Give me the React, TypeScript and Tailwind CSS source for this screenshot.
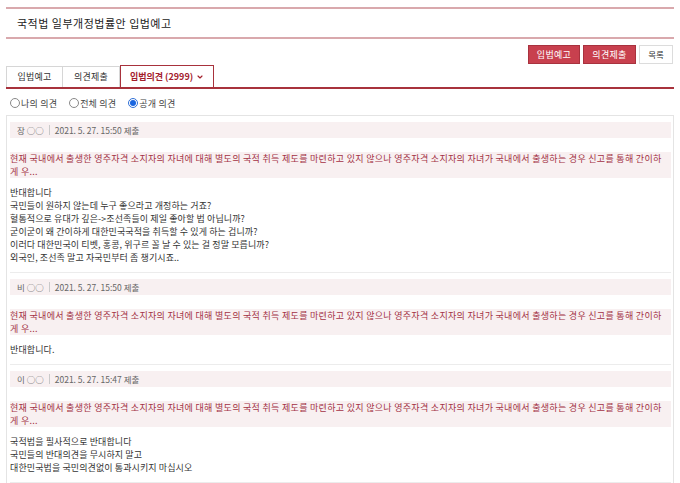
import { ChevronDown } from "lucide-react";

const summaryA =
  "현재 국내에서 출생한 영주자격 소지자의 자녀에 대해 별도의 국적 취득 제도를 마련하고 있지 않으나 영주자격 소지자의 자녀가 국내에서 출생하는 경우 신고를 통해 간이하";
const summaryB = "게 우...";

const comments = [
  {
    name: "장",
    date: "2021. 5. 27. 15:50 제출",
    body: [
      "반대합니다",
      "국민들이 원하지 않는데 누구 좋으라고 개정하는 거죠?",
      "혈통적으로 유대가 깊은->조선족들이 제일 좋아할 법 아닙니까?",
      "굳이굳이 왜 간이하게 대한민국국적을 취득할 수 있게 하는 겁니까?",
      "이러다 대한민국이 티벳, 홍콩, 위구르 꼴 날 수 있는 걸 정말 모릅니까?",
      "외국인, 조선족 말고 자국민부터 좀 챙기시죠..",
    ],
  },
  {
    name: "비",
    date: "2021. 5. 27. 15:50 제출",
    body: ["반대합니다."],
  },
  {
    name: "이",
    date: "2021. 5. 27. 15:47 제출",
    body: [
      "국적법을 필사적으로 반대합니다",
      "국민들의 반대의견을 무시하지 말고",
      "대한민국법을 국민의견없이 통과시키지 마십시오",
    ],
  },
];

function Radio({ label, checked }: { label: string; checked?: boolean }) {
  return (
    <label className="flex items-center">
      <span
        className={
          checked
            ? "w-[10px] h-[10px] rounded-full border border-[#2f6fd6] bg-white flex items-center justify-center"
            : "w-[10px] h-[10px] rounded-full border border-[#888] bg-white"
        }
      >
        {checked && <span className="w-[6px] h-[6px] rounded-full bg-[#1a66e0]" />}
      </span>
      <span className="ml-[1px] text-[9px] tracking-[0.2px] text-[#444] leading-none">{label}</span>
    </label>
  );
}

export default function App() {
  return (
    <div
      className="w-[680px] h-[483px] overflow-hidden bg-white px-[6px] pt-[7px]"
      style={{ fontFamily: '"Noto Sans CJK KR", "Noto Sans", sans-serif' }}
    >
      {/* title */}
      <div className="h-[32px] border-y-2 border-[#d9a9ad] flex items-center pl-[11px]">
        <h1 className="text-[11px] tracking-[0.5px] text-[#222] leading-none">국적법 일부개정법률안 입법예고</h1>
      </div>

      {/* action buttons */}
      <div className="flex justify-end gap-[3px] mt-[6px] pr-[1px]">
        <button className="h-[19px] w-[52px] bg-[#c8404e] border border-[#a8323e] text-white text-[9px] tracking-[0.3px] leading-none">
          입법예고
        </button>
        <button className="h-[19px] w-[53px] bg-[#c8404e] border border-[#a8323e] text-white text-[9px] tracking-[0.3px] leading-none">
          의견제출
        </button>
        <button className="h-[19px] w-[34px] bg-white border border-[#dcdcdc] text-[#333] text-[8.5px] leading-none">
          목록
        </button>
      </div>

      {/* tabs */}
      <div className="mt-[1px] flex items-end border-b-2 border-[#a8323c]">
        <div className="h-[21px] w-[57px] border border-b-0 border-[#d6d6d6] flex items-center justify-center text-[9px] tracking-[0.2px] text-[#333]">
          입법예고
        </div>
        <div className="h-[21px] w-[57px] border border-l-0 border-b-0 border-[#d6d6d6] flex items-center justify-center text-[9px] tracking-[0.2px] text-[#333]">
          의견제출
        </div>
        <div className="h-[22px] w-[94px] border-[1.5px] border-b-0 border-[#a8323c] flex items-center justify-center text-[9px] text-[#a3202c] font-semibold">
          입법의견 (2999)
          <ChevronDown className="ml-[3px]" size={8} strokeWidth={3.5} />
        </div>
      </div>

      {/* filter */}
      <div className="h-[26px] flex items-center gap-[12px] pl-[4px] pt-[2px]">
        <Radio label="나의 의견" />
        <Radio label="전체 의견" />
        <Radio label="공개 의견" checked />
      </div>

      {/* comment list */}
      <div className="border border-[#e4e4e4] pl-[3px] pr-[2px]">
        {comments.map((c, i) => (
          <div key={i} className="pt-[6px] pb-[8px] border-b border-[#ececec]">
            <div className="h-[16px] bg-[#f8f0f1] flex items-center pl-[7px] text-[8.5px] text-[#666] leading-none">
              <span>{c.name} ○○</span>
              <span className="mx-[5px] w-px h-[10px] bg-[#c9c9c9]" />
              <span>{c.date}</span>
            </div>
            <div className="mt-[14px] bg-[#f8f0f1] text-[9px] tracking-[0.3px] leading-[13px] text-[#a33044]">
              <div className="whitespace-nowrap overflow-hidden">{summaryA}</div>
              <div>{summaryB}</div>
            </div>
            <div className="mt-[8px] text-[9px] tracking-[0.1px] leading-[13px] text-[#333]">
              {c.body.map((line, j) => (
                <p key={j}>{line}</p>
              ))}
            </div>
          </div>
        ))}
      </div>
    </div>
  );
}
